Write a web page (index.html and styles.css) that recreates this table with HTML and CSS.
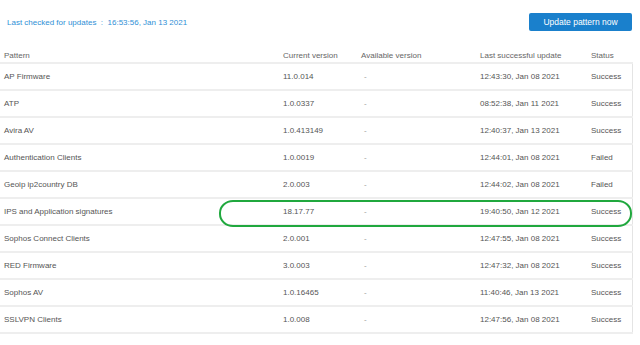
FILE: index.html
```html
<!DOCTYPE html>
<html lang="en">

<head>
  <meta charset="UTF-8">
  <meta name="viewport" content="width=device-width, initial-scale=1.0">
  <title>Pattern updates</title>
  <link rel="stylesheet" href="styles.css">
</head>

<body>
  <div class="page">
    <div class="toolbar">
      <span class="last-checked">Last checked for updates &nbsp;:&nbsp; 16:53:56, Jan 13 2021</span>
      <button type="button" class="update-btn">Update pattern now</button>
    </div>

    <div class="table-wrap">
      <table class="patterns">
        <colgroup>
          <col class="c-name">
          <col class="c-cur">
          <col class="c-avail">
          <col class="c-date">
          <col class="c-status">
        </colgroup>
        <thead>
          <tr>
            <th>Pattern</th>
            <th>Current version</th>
            <th>Available version</th>
            <th>Last successful update</th>
            <th>Status</th>
          </tr>
        </thead>
        <tbody>
          <tr><td>AP Firmware</td><td>11.0.014</td><td>-</td><td>12:43:30, Jan 08 2021</td><td>Success</td></tr>
          <tr><td>ATP</td><td>1.0.0337</td><td>-</td><td>08:52:38, Jan 11 2021</td><td>Success</td></tr>
          <tr><td>Avira AV</td><td>1.0.413149</td><td>-</td><td>12:40:37, Jan 13 2021</td><td>Success</td></tr>
          <tr><td>Authentication Clients</td><td>1.0.0019</td><td>-</td><td>12:44:01, Jan 08 2021</td><td>Failed</td></tr>
          <tr><td>Geoip ip2country DB</td><td>2.0.003</td><td>-</td><td>12:44:02, Jan 08 2021</td><td>Failed</td></tr>
          <tr class="marked"><td>IPS and Application signatures</td><td>18.17.77</td><td>-</td><td>19:40:50, Jan 12 2021</td><td>Success</td></tr>
          <tr><td>Sophos Connect Clients</td><td>2.0.001</td><td>-</td><td>12:47:55, Jan 08 2021</td><td>Success</td></tr>
          <tr><td>RED Firmware</td><td>3.0.003</td><td>-</td><td>12:47:32, Jan 08 2021</td><td>Success</td></tr>
          <tr><td>Sophos AV</td><td>1.0.16465</td><td>-</td><td>11:40:46, Jan 13 2021</td><td>Success</td></tr>
          <tr><td>SSLVPN Clients</td><td>1.0.008</td><td>-</td><td>12:47:56, Jan 08 2021</td><td>Success</td></tr>
        </tbody>
      </table>
      <div class="highlight"></div>
    </div>
  </div>
</body>

</html>
```

FILE: styles.css
```css
* {
  font-family: 'Liberation Sans', Arial, sans-serif;
  box-sizing: border-box;
}

body {
  margin: 0;
  background: #fff;
}

.page {
  width: 632px;
}

.toolbar {
  display: flex;
  align-items: center;
  justify-content: space-between;
  padding: 13px 0 0 7px;
  height: 31px;
}

.last-checked {
  font-size: 8px;
  color: #2f8fd6;
}

.update-btn {
  width: 103px;
  height: 18px;
  border: none;
  border-radius: 2px;
  background-color: #1a80cc;
  color: #fff;
  font-size: 8.5px;
  padding: 0;
}

.table-wrap {
  position: relative;
  margin-top: 14px;
}

table.patterns {
  width: 632px;
  border-collapse: collapse;
  table-layout: fixed;
}

col.c-name { width: 279px; }
col.c-cur { width: 78px; }
col.c-avail { width: 119px; }
col.c-date { width: 111px; }
col.c-status { width: 45px; }

table.patterns th {
  font-weight: normal;
  font-size: 8px;
  color: #666;
  text-align: left;
  padding: 3px 0 0 4px;
  height: 18px;
  vertical-align: middle;
  border-bottom: 2px solid #eee;
}

table.patterns td {
  font-size: 8px;
  color: #555;
  padding: 0 0 0 4px;
  height: 27px;
  border-bottom: 2px solid #eee;
  white-space: nowrap;
}

table.patterns tbody td:last-child {
  border-right: 1px solid #e4e4e4;
}

table.patterns td:nth-child(3) {
  color: #999;
  padding-left: 7px;
}

.highlight {
  position: absolute;
  left: 219px;
  top: 155px;
  width: 413px;
  height: 27px;
  border: 2px solid #20a83e;
  border-radius: 14px / 13px;
}
```
